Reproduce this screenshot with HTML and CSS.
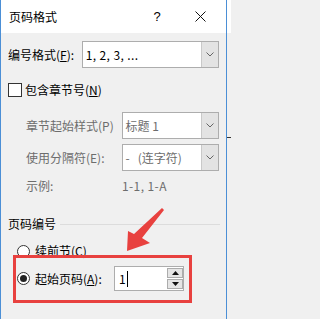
FILE: index.html
```html
<!DOCTYPE html>
<html lang="zh-CN">
<head>
<meta charset="utf-8">
<title>页码格式</title>
<link rel="stylesheet" href="styles.css">
</head>
<body>
<div class="screen">
  <div class="dialog">
    <div class="titlebar">
      <span class="title">页码格式</span>
      <span class="help">?</span>
      <span class="close">
        <svg width="11" height="11" viewBox="0 0 11 11"><path d="M0.5 0.5 L10.5 10.5 M10.5 0.5 L0.5 10.5" stroke="#111" stroke-width="1" fill="none"/></svg>
      </span>
    </div>
    <div class="body">
      <div class="row row-format">
        <span class="label label-format">编号格式(<u>F</u>):</span>
        <div class="combo combo-wide">
          <span class="combo-text latin">1, 2, 3, ...</span>
          <span class="combo-btn"><svg width="8" height="5" viewBox="0 0 8 5"><path d="M0.5 0.5 L4 4 L7.5 0.5" stroke="#666" stroke-width="1" fill="none"/></svg></span>
        </div>
      </div>
      <div class="row row-check">
        <span class="checkbox"></span>
        <span class="label check-label">包含章节号(<u>N</u>)</span>
      </div>
      <div class="row row-sub row-style">
        <span class="label label-sub disabled">章节起始样式(P)</span>
        <div class="combo combo-narrow">
          <span class="combo-text disabled">标题 1</span>
          <span class="combo-btn"><svg width="8" height="5" viewBox="0 0 8 5"><path d="M0.5 0.5 L4 4 L7.5 0.5" stroke="#666" stroke-width="1" fill="none"/></svg></span>
        </div>
      </div>
      <div class="row row-sub row-sep">
        <span class="label label-sub disabled">使用分隔符(E):</span>
        <div class="combo combo-narrow">
          <span class="combo-text disabled">-&nbsp;&nbsp;&nbsp;(连字符)</span>
          <span class="combo-btn"><svg width="8" height="5" viewBox="0 0 8 5"><path d="M0.5 0.5 L4 4 L7.5 0.5" stroke="#666" stroke-width="1" fill="none"/></svg></span>
        </div>
      </div>
      <div class="row row-sub row-example">
        <span class="label label-sub disabled">示例:</span>
        <span class="disabled latin">1-1, 1-A</span>
      </div>
      <div class="row group-head">
        <span class="label">页码编号</span>
        <span class="group-line"></span>
      </div>
      <div class="row row-radio row-radio1">
        <span class="radio"></span>
        <span class="label radio-label">续前节(C)</span>
      </div>
      <div class="row row-radio row-radio2">
        <span class="radio checked"></span>
        <span class="label radio-label start-label">起始页码(<u>A</u>):</span>
        <div class="spin">
          <span class="spin-text">1<span class="caret"></span></span>
          <span class="spin-btns">
            <span class="spin-btn"><svg width="7" height="4" viewBox="0 0 7 4"><path d="M3.5 0 L7 4 L0 4 Z" fill="#111"/></svg></span>
            <span class="spin-btn"><svg width="7" height="4" viewBox="0 0 7 4"><path d="M0 0 L7 0 L3.5 4 Z" fill="#111"/></svg></span>
          </span>
        </div>
      </div>
    </div>
  </div>
  <div class="outside">
    <div class="outside-top"></div>
    <div class="outside-line"></div>
  </div>
  <div class="highlight"></div>
  <svg class="arrow" width="231" height="319" viewBox="0 0 231 319">
    <polygon points="162,208 164,210 142,238 150,243 127,251 128,231 134,234" fill="#e8413f"/>
  </svg>
</div>
</body>
</html>
```

FILE: styles.css
```css
* { box-sizing: border-box; }
html, body { margin: 0; padding: 0; }
body {
  font-family: "Noto Sans CJK SC", "Noto Sans", sans-serif;
  font-size: 12px;
  color: #000;
  background: #f0f0f0;
}
.screen {
  position: relative;
  display: flex;
  width: 231px;
  height: 319px;
  overflow: hidden;
}
.dialog {
  flex: none;
  width: 227px;
  height: 319px;
  border-left: 1px solid #4b8fd6;
  border-right: 1px solid #4b8fd6;
  background: #f0f0f0;
  display: flex;
  flex-direction: column;
}
.titlebar {
  height: 33px;
  background: #fff;
  display: flex;
  align-items: center;
  flex: none;
}
.title {
  flex: 1;
  padding-left: 8px;
  font-size: 12px;
  line-height: 16px;
}
.help {
  width: 28px;
  text-align: center;
  font-family: "Liberation Sans", sans-serif;
  font-size: 13px;
  line-height: 16px;
}
.close {
  width: 46px;
  margin-left: 6px;
  margin-right: 3px;
  display: flex;
  justify-content: center;
  align-items: center;
}
.close svg { display: block; }
.body {
  padding: 0 7px;
  display: flex;
  flex-direction: column;
}
.row {
  display: flex;
  align-items: center;
  line-height: 16px;
}
.label { white-space: nowrap; }
.disabled { color: #6d6d6d; }
.latin { letter-spacing: 0.4px; }
u { text-decoration: underline; text-underline-offset: 1px; }

.row-format { margin-top: 8px; height: 27px; }
.label-format { width: 74px; }

.combo {
  display: flex;
  height: 27px;
  border: 1px solid #adadad;
  background: #fff;
}
.combo-wide { width: 138px; }
.combo-narrow { width: 98px; }
.combo-text {
  flex: 1;
  padding-left: 3px;
  display: flex;
  align-items: center;
  white-space: nowrap;
}
.combo-btn {
  width: 17px;
  background: #e3e3e3;
  border-left: 1px solid #c9c9c9;
  display: flex;
  align-items: center;
  justify-content: center;
}
.combo-btn svg { display: block; }

.row-check { margin-top: 15px; height: 14px; }
.checkbox {
  width: 14px;
  height: 14px;
  border: 1px solid #333;
  background: #fff;
  flex: none;
}
.check-label { margin-left: 3px; }

.row-sub { padding-left: 18px; }
.label-sub { width: 96px; }
.row-style { margin-top: 15px; height: 27px; }
.row-sep { margin-top: 5px; height: 27px; }
.row-example { margin-top: 7px; height: 16px; }

.group-head { margin-top: 22px; height: 16px; }
.group-line {
  flex: 1;
  height: 1px;
  background: #dcdcdc;
  margin-left: 4px;
  margin-right: -1px;
}

.row-radio { padding-left: 9px; }
.row-radio1 { margin-top: 11px; height: 16px; }
.row-radio2 { margin-top: 7px; height: 25px; }
.radio {
  width: 13px;
  height: 13px;
  border: 1px solid #333;
  border-radius: 50%;
  background: #fff;
  flex: none;
  display: flex;
  align-items: center;
  justify-content: center;
}
.radio.checked::after {
  content: "";
  width: 7px;
  height: 7px;
  border-radius: 50%;
  background: #222;
}
.radio-label { margin-left: 5px; }
.start-label { width: 79px; }

.spin {
  width: 70px;
  height: 25px;
  border: 1px solid #adadad;
  background: #fff;
  display: flex;
}
.spin-text {
  flex: 1;
  padding-left: 4px;
  display: flex;
  align-items: center;
  font-size: 12px;
}
.caret {
  display: inline-block;
  width: 1px;
  height: 16px;
  background: #000;
  margin-left: 1px;
}
.spin-btns {
  width: 16px;
  margin: 1px 0 1px 0;
  display: flex;
  flex-direction: column;
  gap: 1px;
}
.spin-btn {
  flex: 1;
  background: #e5e5e5;
  border: 1px solid #acacac;
  display: flex;
  align-items: center;
  justify-content: center;
}
.spin-btn svg { display: block; }

.outside {
  flex: 1;
  background: #f0f0f0;
  display: flex;
  flex-direction: column;
}
.outside-top { height: 33px; background: #fff; }
.outside-line { margin-top: 104px; height: 1px; background: #333; }

.highlight {
  position: absolute;
  left: 13px;
  top: 255px;
  width: 179px;
  height: 48px;
  border: 3px solid #e8413f;
}
.arrow {
  position: absolute;
  left: 0;
  top: 0;
  pointer-events: none;
}
```
